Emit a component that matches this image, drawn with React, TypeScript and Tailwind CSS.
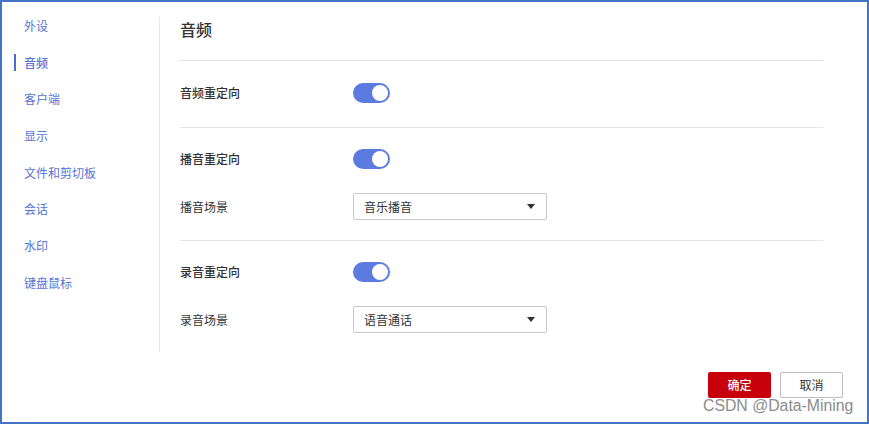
import React from "react";

const navItems = ["外设", "音频", "客户端", "显示", "文件和剪切板", "会话", "水印", "键盘鼠标"];

function Toggle() {
  return (
    <div className="flex h-[20px] w-[37px] items-center justify-end rounded-full bg-[#5b7be0] pr-[2px]">
      <div className="h-[16px] w-[16px] rounded-full bg-white" />
    </div>
  );
}

function Select({ value }: { value: string }) {
  return (
    <div className="flex h-[27px] w-[194px] items-center justify-between rounded-[2px] border border-[#c9c9c9] bg-white pl-[10px] pr-[11px] text-[12px] text-[#333]">
      <span>{value}</span>
      <svg width="8" height="5" viewBox="0 0 8 5">
        <path d="M0 0H8L4 5Z" fill="#333" />
      </svg>
    </div>
  );
}

function Row({ label, bold, children }: { label: string; bold?: boolean; children: React.ReactNode }) {
  return (
    <div className="flex items-center">
      <span className={`w-[173px] text-[12px] text-[#333] ${bold ? "font-medium" : "font-normal"}`}>{label}</span>
      {children}
    </div>
  );
}

export default function App() {
  return (
    <div
      className="relative flex h-[424px] w-[869px] flex-col border-2 border-[#4472c4] bg-white"
      style={{ fontFamily: '"Noto Sans CJK SC", "Noto Sans", sans-serif' }}
    >
      <div className="flex">
        {/* Sidebar */}
        <nav className="flex w-[157px] flex-col pt-[5px]">
          {navItems.map((item) => (
            <div key={item} className="flex h-[36.7px] items-center pl-[12px]">
              <span
                className={`border-l-2 pl-[8px] text-[12px] leading-[17px] text-[#5574d6] ${
                  item === "音频" ? "border-[#4b6bd0] font-medium" : "border-transparent"
                }`}
              >
                {item}
              </span>
            </div>
          ))}
        </nav>

        {/* Content */}
        <div className="mt-[15px] flex-1 border-l border-[#e6e6e6] pl-[20px] pr-[44px] pb-[19px]">
          <div className="h-[44px] border-b border-[#e4e4e4] pt-[1px] text-[16px] leading-[22px] font-medium text-[#333]">
            音频
          </div>

          <div className="border-b border-[#e4e4e4] pt-[22px] pb-[24px]">
            <Row label="音频重定向" bold>
              <Toggle />
            </Row>
          </div>

          <div className="flex flex-col gap-[24px] border-b border-[#e4e4e4] pt-[21px] pb-[20px]">
            <Row label="播音重定向" bold>
              <Toggle />
            </Row>
            <Row label="播音场景">
              <Select value="音乐播音" />
            </Row>
          </div>

          <div className="flex flex-col gap-[24px] pt-[21px]">
            <Row label="录音重定向" bold>
              <Toggle />
            </Row>
            <Row label="录音场景">
              <Select value="语音通话" />
            </Row>
          </div>
        </div>
      </div>

      {/* Footer */}
      <div className="mt-[20px] flex justify-end gap-[9px] pr-[24px]">
        <button className="flex h-[26px] w-[63px] items-center justify-center rounded-[2px] bg-[#c7000b] text-[12px] font-medium text-white">
          确定
        </button>
        <button className="flex h-[26px] w-[63px] items-center justify-center rounded-[2px] border border-[#bdbdbd] bg-white text-[12px] text-[#333]">
          取消
        </button>
      </div>

      {/* Watermark */}
      <span
        className="absolute left-[701px] top-[394px] text-[15.8px] leading-[20px] text-[#8c8c8c]"
        style={{ fontFamily: '"Liberation Sans", Arial, sans-serif' }}
      >
        CSDN @Data-Mining
      </span>
    </div>
  );
}
